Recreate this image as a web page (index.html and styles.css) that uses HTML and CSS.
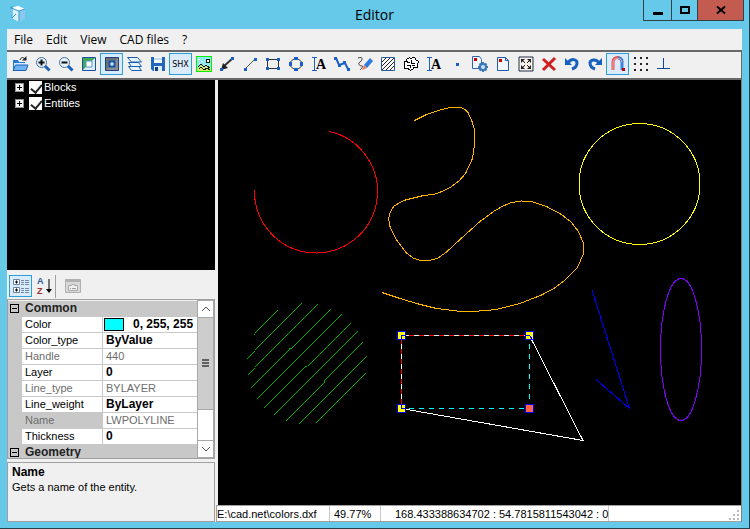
FILE: index.html
```html
<!DOCTYPE html>
<html lang="en">
<head>
    <meta charset="UTF-8">
    <meta name="viewport" content="width=device-width, initial-scale=1.0">
    <title>Editor</title>
    <link rel="stylesheet" href="styles.css">
</head>
<body>
<div class="window">
    <header class="titlebar">
        <svg class="app-icon" width="18" height="18" viewBox="0 0 18 18">
            <path d="M2 3 9 1l7 3v9l-6 4-7-4z" fill="#b9e2f7"/>
            <path d="M2 3l8 3v11l-7-4z" fill="#d8f0fc"/>
            <path d="M10 6l6-2v9l-6 4z" fill="#8cc8ec"/>
            <path d="M2 3l7-2 7 3-6 2z" fill="#fff"/>
            <path d="M2 3l8 3 6-2M10 6v11M3 13l4-4M1 3h3M3 1v12" fill="none" stroke="#2f9bd8"/>
        </svg>
        <h1 class="title">Editor</h1>
        <div class="window-buttons">
            <button class="win-btn" aria-label="Minimize"><svg width="10" height="10"><path d="M0 8.500h10" stroke="#000" stroke-width="3"/></svg></button>
            <button class="win-btn win-max" aria-label="Maximize"><svg width="10" height="10"><path d="M1 2h8v6H1z" fill="none" stroke="#000" stroke-width="2"/></svg></button>
            <button class="win-btn win-close" aria-label="Close"><svg width="10" height="10"><path d="M1 1.500l8 7M9 1.500l-8 7" stroke="#000" stroke-width="2"/></svg></button>
        </div>
    </header>

    <nav class="menubar">
        <button>File</button>
        <button>Edit</button>
        <button>View</button>
        <button>CAD files</button>
        <button>?</button>
    </nav>

    <div class="toolbar">
        <!-- file and zoom -->
        <button class="tool" aria-label="Open"><svg viewBox="0 0 16 16">
            <path d="M1 4h5l1 2h6v8H1z" fill="#2779cf"/><path d="M2 7h12v6H2z" fill="#d4ecff"/>
            <path d="M3.500 9H16l-2 5.500H1z" fill="#6db3f2" stroke="#1c62bb"/>
            <path d="M8 4c1-3 3-3 5-1" fill="none" stroke="#222"/><path d="M14.500 0v4.500H10z" fill="#222"/></svg></button>
        <button class="tool" aria-label="Zoom in"><svg viewBox="0 0 16 16">
            <path d="M10 10l4.500 4.500" stroke="#1660b8" stroke-width="3"/>
            <circle cx="6.500" cy="6.500" r="5" fill="#e4f3ff" stroke="#4a6f99"/><path d="M3.500 6.500h6M6.500 3.500v6" stroke="#111" stroke-width="2"/></svg></button>
        <button class="tool" aria-label="Zoom out"><svg viewBox="0 0 16 16">
            <path d="M10 10l4.500 4.500" stroke="#1660b8" stroke-width="3"/>
            <circle cx="6.500" cy="6.500" r="5" fill="#e4f3ff" stroke="#4a6f99"/><path d="M3.500 6.500h6" stroke="#111" stroke-width="2"/></svg></button>
        <button class="tool" aria-label="White background"><svg viewBox="0 0 16 16">
            <path d="M1.500 1.500h13v13h-13z" fill="#d8f0fb" stroke="#1d4fa0"/><path d="M2 2h12L2 14z" fill="#3cae50"/>
            <path d="M5 5h6v6H5z" fill="#fff" stroke="#5c93c9"/></svg></button>
        <button class="tool checked" aria-label="Black background"><svg viewBox="0 0 16 16">
            <path d="M1.500 1.500h13v13h-13z" fill="#8b8b90" stroke="#173f88"/><path d="M2 2h12L2 14z" fill="#6f7076"/>
            <path d="M5.500 5.500h5v5h-5z" fill="#d8efff" stroke="#1556a5" stroke-width="2"/></svg></button>
        <button class="tool" aria-label="Layers"><svg viewBox="0 0 16 16">
            <g fill="#e6f5ff" stroke="#1b5cae"><path d="M1.500 10.500h10l3 4h-10z"/><path d="M1.500 6.500h10l3 4h-10z"/><path d="M.500 1.500h10l4 4.500h-10z"/></g></svg></button>
        <button class="tool" aria-label="Save"><svg viewBox="0 0 16 16">
            <path d="M1 1h14v14H3l-2-2z" fill="#2167bd"/><path d="M4 1h8v6H4z" fill="#f3faff"/><path d="M4 3h8" stroke="#8db8dd"/>
            <path d="M4 10h8v5H4z" fill="#dceefa"/><path d="M5 11h3v4H5z" fill="#173f80"/></svg></button>
        <button class="tool checked" aria-label="SHX fonts"><span class="shx">SHX</span></button>
        <button class="tool" aria-label="Raster image"><svg viewBox="0 0 16 16" shape-rendering="crispEdges">
            <path d="M.500.500h15v15H.500z" fill="#8fe9ef" stroke="#00f000"/>
            <path d="M1 13l4-4 3 3 3-2 4 3v2H1z" fill="#d9e66c"/><path d="M2 11l3-3 3 3 2-2 4 3M3 13l2-2 3 3 3-2 3 2" fill="none" stroke="#111"/>
            <path d="M10 3h3v3h-3z" fill="#fff" stroke="#111"/><path d="M2 3h2M5 5h2M3 7h1" stroke="#fff"/></svg></button>

        <!-- drawing -->
        <button class="tool" aria-label="Ray"><svg viewBox="0 0 16 16">
            <path d="M4 11L14 2" stroke="#333" stroke-width="2"/><path d="M2 14l2-7 5 5z" fill="#222"/><path d="M12 1h3v3h-3zM1 12h3v3H1z" fill="#1c5fc4"/></svg></button>
        <button class="tool" aria-label="Line"><svg viewBox="0 0 16 16">
            <path d="M3 13L13 3" stroke="#555"/><path d="M12 2h3v3h-3zM2 12h3v3H2z" fill="#1c5fc4"/></svg></button>
        <button class="tool" aria-label="Rectangle"><svg viewBox="0 0 16 16">
            <path d="M2.500 3.500h11v9h-11z" fill="none" stroke="#333"/><path d="M1 2h3v3H1zM12 2h3v3h-3zM1 11h3v3H1zM12 11h3v3h-3z" fill="#1c5fc4"/></svg></button>
        <button class="tool" aria-label="Ellipse"><svg viewBox="0 0 16 16">
            <ellipse cx="8" cy="8" rx="6" ry="5" fill="none" stroke="#333"/><path d="M6 1h4v3H6zM6 12h4v3H6zM1 6h3v4H1zM12 6h3v4h-3z" fill="#1c5fc4"/></svg></button>
        <button class="tool" aria-label="Text"><svg viewBox="0 0 16 16">
            <path d="M1 1.500h5M1 14.500h5M3.500 2v12" fill="none" stroke="#1c5fc4"/><text class="letter" x="5" y="13">A</text></svg></button>
        <button class="tool" aria-label="Polyline"><svg viewBox="0 0 16 16">
            <path d="M2 2l3 7 6-2 3 6" fill="none" stroke="#1c5fc4" stroke-width="2"/><path d="M0 1h3v3H0zM4 8h3v3H4zM9 5h3v3H9zM13 12h3v3h-3z" fill="#1c5fc4"/></svg></button>
        <button class="tool" aria-label="Freehand"><svg viewBox="0 0 16 16">
            <path d="M1 2c5-2 5 2 2 4s0 4 2 4-1 3-2 4" fill="none" stroke="#333"/><path d="M7 9l6-7 3 3-6 7z" fill="#2b7be0"/><path d="M7 9l3 3-5 2z" fill="#e8805e"/></svg></button>
        <button class="tool" aria-label="Hatch"><svg viewBox="0 0 16 16">
            <path d="M1.500 1.500h13v13h-13z" fill="#fff" stroke="#2c5797"/><path d="M2 6l4-4M2 10l8-8M2 14L14 2M6 14l8-8M10 14l4-4" stroke="#222"/></svg></button>
        <button class="tool" aria-label="Cloud"><svg viewBox="0 0 16 16" shape-rendering="crispEdges">
            <path d="M4 5C3 2 7 1 8 3c2-3 5-1 5 1 3 0 3 3 1 4 2 3-1 5-3 3-1 4-5 4-6 1-3 2-5-1-3-3-2-2-1-4 2-4zM4 6h3M8 4v3h4M4 9h3v3M9 9h3" fill="#fff" stroke="#000"/></svg></button>
        <button class="tool" aria-label="Multiline text"><svg viewBox="0 0 16 16">
            <path d="M1 1.500h5M1 14.500h5M3.500 2v12" fill="none" stroke="#1c5fc4"/><text class="letter" x="5" y="13">A</text></svg></button>
        <button class="tool" aria-label="Point"><svg viewBox="0 0 16 16"><path d="M7 7h3v3H7z" fill="#1c5fc4"/></svg></button>
        <button class="tool" aria-label="Insert block"><svg viewBox="0 0 16 16">
            <path d="M.500.500h7l2 3v9h-9z" fill="#f1f8ff" stroke="#2f65a8"/><path d="M2 2h3v3H2z" fill="#d00000"/>
            <circle cx="11" cy="11" r="3" fill="#cbe5fb" stroke="#3b76b8" stroke-width="2"/><path d="M11 6v2M11 14v2M6 11h2M14 11h2M7.500 7.500L9 9M13 13l1.500 1.500M7.500 14.500L9 13M13 9l1.500-1.500" stroke="#3b76b8" stroke-width="2"/></svg></button>
        <button class="tool" aria-label="New layout"><svg viewBox="0 0 16 16">
            <path d="M2.500 1.500h8l3 3v10h-11z" fill="#f1f8ff" stroke="#2059ae"/><path d="M10.500 1.500v3h3" fill="none" stroke="#2059ae"/><path d="M4 3h3v3H4z" fill="#d00000"/></svg></button>

        <!-- editing -->
        <button class="tool" aria-label="Fit to window"><svg viewBox="0 0 16 16">
            <path d="M1 1h14v14H1z" fill="#f6f2e8" stroke="#1f2f50"/><path d="M3 3h4L3 7zM13 3v4L9 3zM3 13V9l4 4zM13 13H9l4-4z" fill="#222"/><path d="M4 4l3 3M12 4L9 7M4 12l3-3M12 12L9 9" stroke="#222"/></svg></button>
        <button class="tool" aria-label="Delete"><svg viewBox="0 0 16 16">
            <path d="M2 3l12 11M14 2L2 14" stroke="#d01f1f" stroke-width="3"/></svg></button>
        <button class="tool" aria-label="Undo"><svg viewBox="0 0 16 16">
            <path d="M4 7c3-5 9-4 9 0 0 3-2 5-5 6" fill="none" stroke="#1660be" stroke-width="3"/><path d="M1 2v7h7z" fill="#1660be"/></svg></button>
        <button class="tool" aria-label="Redo"><svg viewBox="0 0 16 16">
            <path d="M12 7C9 2 3 4 3 7s2 5 5 6" fill="none" stroke="#1660be" stroke-width="3"/><path d="M15 2v7H8z" fill="#1660be"/></svg></button>

        <!-- snapping -->
        <button class="tool checked" aria-label="Object snap"><svg viewBox="0 0 16 16">
            <path d="M3 14V6c0-6 9-6 9 0" fill="none" stroke="#e05050" stroke-width="3"/><path d="M8 2c3 0 4 2 4 4v8" fill="none" stroke="#3a86e0" stroke-width="3"/>
            <path d="M3 14V6c0-5 8-5 9 0" fill="none" stroke="#f5a5a5"/><path d="M12 12h3v3h-3z" fill="#c00000"/></svg></button>
        <button class="tool" aria-label="Grid"><svg viewBox="0 0 16 16">
            <path d="M1 1h2v2H1zM7 1h2v2H7zM13 1h2v2h-2zM1 7h2v2H1zM7 7h2v2H7zM13 7h2v2h-2zM1 13h2v2H1zM7 13h2v2H7zM13 13h2v2h-2z" fill="#222"/></svg></button>
        <button class="tool" aria-label="Ortho"><svg viewBox="0 0 16 16" shape-rendering="crispEdges">
            <path d="M1 12.500h13M7.500 2v10" stroke="#0a45a8"/></svg></button>
    </div>

    <main class="workspace">
        <section class="sidebar">
            <div class="tree">
                <div class="tree-row"><span class="expander"></span><input type="checkbox" id="blocks" checked><label for="blocks">Blocks</label></div>
                <div class="tree-row"><span class="expander"></span><input type="checkbox" id="entities" checked><label for="entities">Entities</label></div>
            </div>

            <div class="prop-toolbar">
                <button class="tool checked" aria-label="Categorized"><svg viewBox="0 0 16 16">
                    <path d="M.500 1.500h6v5h-6zM.500 9.500h6v5h-6z" fill="#fff" stroke="#6387ad"/><path d="M2 4h3M3.500 2.500v3M2 12h3M3.500 10.500v3" stroke="#000"/>
                    <path d="M8 2.500h3M12 2.500h4M8 4.500h3M12 4.500h4M8 6.500h3M12 6.500h4M8 10.500h3M12 10.500h4M8 12.500h3M12 12.500h4M8 14.500h3M12 14.500h4" stroke="#7189aa"/></svg></button>
                <button class="tool" aria-label="Alphabetical"><svg viewBox="0 0 16 16">
                    <text class="sort-a" x="1" y="6">A</text><text class="sort-z" x="1" y="16">Z</text><path d="M13 1v13" stroke="#000"/><path d="M10 11h6l-3 4z"/></svg></button>
                <span class="divider"></span>
                <button class="tool" aria-label="Property pages" disabled><svg viewBox="0 0 16 16">
                    <path d="M.500 1.500h15v13H.500z" fill="#d8d8d8" stroke="#b0b0b0"/><path d="M1 3h14" stroke="#b0b0b0" stroke-width="2"/><path d="M3.500 7.500h3v-1h3v1h3v5h-9z" fill="#efefef" stroke="#aaa"/><path d="M5 10.500h1M7 10.500h4" stroke="#999"/></svg></button>
            </div>

            <div class="prop-grid">
                <table class="props">
                    <tbody>
                        <tr class="group"><th class="gutter"><span class="minus"></span></th><th colspan="2">Common</th></tr>
                        <tr><td class="gutter"></td><th>Color</th><td><span class="swatch"></span>0, 255, 255</td></tr>
                        <tr><td class="gutter"></td><th>Color_type</th><td>ByValue</td></tr>
                        <tr class="readonly"><td class="gutter"></td><th>Handle</th><td>440</td></tr>
                        <tr><td class="gutter"></td><th>Layer</th><td>0</td></tr>
                        <tr class="readonly"><td class="gutter"></td><th>Line_type</th><td>BYLAYER</td></tr>
                        <tr><td class="gutter"></td><th>Line_weight</th><td>ByLayer</td></tr>
                        <tr class="readonly selected"><td class="gutter"></td><th>Name</th><td>LWPOLYLINE</td></tr>
                        <tr><td class="gutter"></td><th>Thickness</th><td>0</td></tr>
                        <tr class="group"><th class="gutter"><span class="minus"></span></th><th colspan="2">Geometry</th></tr>
                    </tbody>
                </table>
                <div class="scrollbar">
                    <button aria-label="Scroll up"><svg width="8" height="6"><path d="M0 5l4-4 4 4" fill="none" stroke="#555"/></svg></button>
                    <div class="track"><div class="thumb"></div></div>
                    <button aria-label="Scroll down"><svg width="8" height="6"><path d="M0 1l4 4 4-4" fill="none" stroke="#555"/></svg></button>
                </div>
            </div>

            <div class="description">
                <h2>Name</h2>
                <p>Gets a name of the entity.</p>
            </div>
        </section>

        <section class="editor">
            <svg class="drawing" shape-rendering="crispEdges">
                <g transform="translate(-218 -80)" fill="none">
                    <path d="M329.500 131.500A61.500 61.500 0 1 1 254.500 190.500" stroke="#f00"/>
                    <polyline stroke="#ffb400" points="414.500,120.500 426.500,114.500 441.500,109.500 450.500,107.500 460.500,107.500 465,109.500 468,112.500 472,121.500 474.500,130 474.500,145 472.500,158.500 465.500,173.500 459,181 450,187.500 442,191.500 433.500,194.500 423.500,195.500 403.500,200.500 393.500,206.500 390,213 388.500,218.500 390,226.500 396.500,240 406.500,253 413,258 420,260.500 426.500,261 437.500,258.500 446.500,252 460,239.500 480,221.500 493.500,211.500 503,206 511.500,202.500 521.500,201 531.500,201.500 546.500,206.500 561.500,214.500 571,222 578.500,231.500 583.500,243.500 583.500,253.500 577.500,267.500 564,281 553,289 541.500,295 520,303.500 496.500,309.500 473.500,311.500 456.500,311 436.500,308.500 416.500,303.500 400,298.500 382,292.500"/>
                    <circle cx="639.500" cy="184" r="60.500" stroke="#ff0"/>
                    <ellipse cx="681" cy="349.500" rx="20.500" ry="71" stroke="#7f00ff"/>
                    <path d="M592 290L629.500 408.500L596 379.500" stroke="#00f"/>
                    <path class="hatch" d="M253 334.500L277.500 310M246 358.500L301.500 303M247 374.500L317.500 304M250 387.500L289 348.500h1.500L330.500 308.500M257 398.500L341.500 314M264 407.500L305.500 366h1.500L350.500 322.500M274 414.500L357.500 331M285 420.500L324 381.500v-1L362.500 342M299 423.500L366.500 356M316 422.500L365.500 373"/>
                    <!-- selected polyline with its drag preview -->
                    <path d="M401.500 408.500V335.500H529.500" stroke="#f00"/>
                    <path d="M401.500 408.500V335.500M403.500 335.500H529.500" stroke="#fff" stroke-dasharray="5 5"/>
                    <path d="M529.500 344V408.500M409 408.500H529.500" stroke="#0ff" stroke-dasharray="5 5"/>
                    <path d="M401.500 408.500L583 440.500L529.500 335.500" stroke="#fff"/>
                    <g fill="#ff0" stroke="#00f">
                        <rect x="397.500" y="331.500" width="8" height="8"/>
                        <rect x="525.500" y="331.500" width="8" height="8"/>
                        <rect x="397.500" y="404.500" width="8" height="8"/>
                        <rect x="525.500" y="404.500" width="8" height="8" fill="#ff6347"/>
                        <path d="M401.500 339V335.500H405M526 335.500H529.500L532 339M401.500 405V408.500H405" fill="none"/>
                    </g>
                </g>
            </svg>
            <footer class="statusbar">
                <span class="file-path">E:\cad.net\colors.dxf</span>
                <span class="zoom">49.77%</span>
                <span class="coords">168.433388634702 : 54.7815811543042 : 0</span>
                <svg class="grip" width="10" height="10"><path d="M8 0h2v2H8zM4 4h2v2H4zM8 4h2v2H8zM0 8h2v2H0zM4 8h2v2H4zM8 8h2v2H8z" fill="#bbb"/></svg>
            </footer>
        </section>
    </main>
</div>
</body>
</html>
```

FILE: styles.css
```css
* {
    box-sizing: border-box;
}
body {
    margin: 0;
    font-family: "Liberation Sans", Arial, sans-serif;
    font-size: 11px;
    color: #000;
}
button {
    padding: 0;
    border: none;
    background: none;
    font: inherit;
    color: inherit;
}
.window {
    display: flex;
    flex-direction: column;
    height: 100vh;
    padding: 0 7px 6px;
    background-color: #66c9ea;
    border-right: 1px solid #2b3f49;
    border-bottom: 1px solid #2b3f49;
}

/* title bar */
.titlebar {
    display: grid;
    grid-template-columns: 1fr auto 1fr;
    height: 29px;
    flex: none;
}
.app-icon {
    margin: 5px 2px;
}
.title {
    margin: 0;
    font: 14px/29px "Open Sans", sans-serif;
}
.window-buttons {
    display: flex;
    justify-self: end;
    height: 21px;
    margin-right: -2px;
    border: 1px solid #33414a;
    border-top: none;
}
.win-btn {
    display: flex;
    align-items: center;
    justify-content: center;
    width: 27px;
}
.win-max {
    border-left: 1px solid #33414a;
    border-right: 1px solid #33414a;
}
.win-close {
    width: 45px;
    background-color: #c35b50;
}

/* menu */
.menubar {
    display: flex;
    gap: 13px;
    flex: none;
    height: 21px;
    padding: 0 7px;
    background-color: #f0f0f0;
    font: 12px/20px "Open Sans", sans-serif;
}

/* tool buttons */
.toolbar {
    display: flex;
    flex: none;
    height: 30px;
    padding: 1px 0 0 1px;
    background-color: #f0f0f0;
    border: 2px solid #696969;
    border-width: 2px 1px 2px 0;
}
.tool {
    display: flex;
    align-items: center;
    justify-content: center;
    flex: none;
    width: 23px;
    height: 22px;
    border: 1px solid transparent;
}
.tool svg {
    width: 16px;
    height: 16px;
    flex: none;
    overflow: visible;
}
.checked {
    background-color: #dcebfc;
    border-color: #26a0da;
}
.shx {
    font: 8px "DejaVu Sans", sans-serif;
}
.letter {
    font: bold 14px "Liberation Serif", serif;
}

.workspace {
    display: flex;
    flex: 1;
    min-height: 0;
}
.sidebar {
    display: flex;
    flex-direction: column;
    flex: none;
    width: 211px;
    padding-right: 3px;
    background-color: #f0f0f0;
}

/* tree of the drawing */
.tree {
    flex: none;
    height: 190px;
    padding-left: 8px;
    background-color: #000;
    color: #fff;
}
.tree-row {
    display: flex;
    align-items: center;
    height: 16px;
    line-height: 14px;
    padding-bottom: 2px;
}
.expander {
    width: 9px;
    height: 9px;
    margin-right: 5px;
    background:
        linear-gradient(#000, #000) center / 5px 1px no-repeat,
        linear-gradient(#000, #000) center / 1px 5px no-repeat,
        #f4f4f4;
    border: 1px solid #919191;
}
.tree-row input {
    appearance: none;
    position: relative;
    width: 13px;
    height: 13px;
    margin: 0 2px 0 0;
    background-color: #fff;
}
.tree-row input:checked::after {
    content: "";
    position: absolute;
    left: 4px;
    top: 1px;
    width: 5px;
    height: 9px;
    border: solid #222;
    border-width: 0 2px 2px 0;
    transform: rotate(40deg);
}

/* property grid */
.prop-toolbar {
    display: flex;
    align-items: center;
    flex: none;
    height: 29px;
    padding: 3px 2px 0;
}
.divider {
    width: 1px;
    height: 23px;
    margin: 0 5px 0 0;
    background-color: #a0a0a0;
}
.sort-a,
.sort-z {
    font: bold 9px "Liberation Sans", sans-serif;
    fill: #2b5c9e;
}
.sort-z {
    fill: #a03030;
}
.prop-grid {
    display: flex;
    flex: 1;
    min-height: 0;
    overflow: hidden;
    border: 1px solid #a0a0a0;
}
.props {
    flex: 1;
    table-layout: fixed;
    border-collapse: separate;
    border-spacing: 0;
    height: 160px;
    min-width: 0;
    margin-top: 1px;
    line-height: 15px;
    white-space: nowrap;
}
.props th,
.props td {
    height: 16px;
    padding: 0 3px;
    overflow: hidden;
    text-align: left;
    background-color: #fff;
    border-bottom: 1px solid #c8c8c8;
}
.props th {
    width: 81px;
    font-weight: normal;
    border-right: 1px solid #c8c8c8;
}
.props td {
    font-size: 12px;
    font-weight: bold;
}
.props .gutter {
    width: 14px;
    padding: 0 2px;
    background-color: #c8c8c8;
}
.props .group th {
    font-size: 12px;
    font-weight: bold;
    background-color: #c8c8c8;
    color: #222;
}
.props .readonly th,
.props .readonly td {
    color: #6d6d6d;
    font-size: 11px;
    font-weight: normal;
}
.props .selected th {
    background-color: #c8c8c8;
}
.minus {
    display: block;
    width: 9px;
    height: 9px;
    border: 1px solid #000;
    background: linear-gradient(#000, #000) center / 5px 1px no-repeat;
}
.swatch {
    display: inline-block;
    width: 20px;
    height: 13px;
    margin: 1px 9px 0 -2px;
    vertical-align: top;
    background-color: #0ff;
    border: 1px solid #000;
}
.scrollbar {
    display: flex;
    flex-direction: column;
    flex: none;
    width: 17px;
    background-color: #fff;
    border: 1px solid #a8a8a8;
}
.scrollbar button {
    display: flex;
    align-items: center;
    justify-content: center;
    height: 16px;
}
.track {
    flex: 1;
    border: solid #a8a8a8;
    border-width: 1px 0;
}
.thumb {
    height: 75%;
    background: repeating-linear-gradient(#606060 0 2px, #cdcdcd 2px 3px) 4px center / 7px 8px no-repeat #cdcdcd;
    border-bottom: 1px solid #a8a8a8;
}
.description {
    flex: none;
    height: 60px;
    margin-top: 3px;
    padding: 2px 4px;
    border: 1px solid #a0a0a0;
    line-height: 15px;
}
.description h2 {
    margin: 0;
    font-size: 12px;
}
.description p {
    margin: 0;
}

/* canvas */
.editor {
    display: flex;
    flex-direction: column;
    flex: 1;
    min-width: 0;
    background-color: #000;
    border-right: 1px solid #808080;
}
.drawing {
    flex: 1;
    width: 100%;
    min-height: 0;
}
.hatch {
    stroke: #0f0;
    stroke-width: 0.7px;
}
.statusbar {
    display: flex;
    flex: none;
    height: 17px;
    margin-left: -2px;
    background-color: #fff;
    border: 1px solid #a0a0a0;
    border-right: none;
    line-height: 16px;
}
.statusbar span {
    border-right: 1px solid #c8c8c8;
}
.file-path {
    width: 113px;
}
.zoom {
    width: 51px;
    padding-left: 4px;
}
.coords {
    padding-left: 14px;
}
.grip {
    align-self: flex-end;
    margin: 0 2px 1px auto;
}
```
